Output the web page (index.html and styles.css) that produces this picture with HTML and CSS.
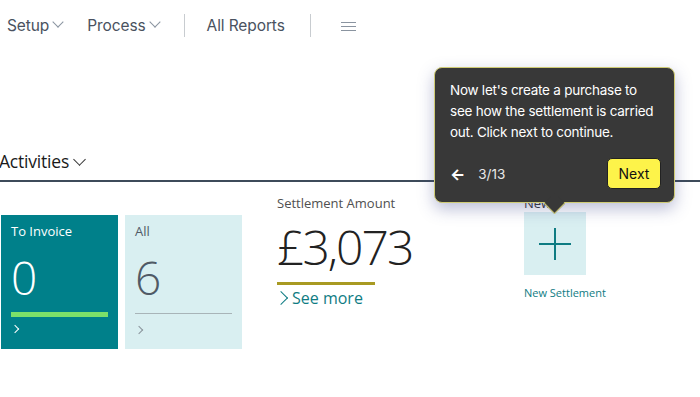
FILE: index.html
```html
<!DOCTYPE html>
<html lang="en">
  <head>
    <meta charset="UTF-8" />
    <meta name="viewport" content="width=device-width, initial-scale=1.0" />
    <title>Settlements</title>
    <link rel="stylesheet" href="styles.css">
  </head>
  <body>
    <!-- 顶部导航 -->
    <nav class="topnav">
      <a class="nav-item" href="#">Setup<span class="chev"></span></a>
      <a class="nav-item" href="#">Process<span class="chev"></span></a>
      <span class="nav-sep"></span>
      <a class="nav-item" href="#">All Reports</a>
      <span class="nav-sep"></span>
      <span class="burger"><i></i><i></i><i></i></span>
    </nav>

    <section class="activities">
      <h2 class="part-title">Activities<span class="chev"></span></h2>

      <div class="cues">
        <a class="cue cue-dark" href="#">
          <span class="cue-label">To Invoice</span>
          <span class="cue-value">0</span>
          <span class="cue-bar bar-green"></span>
          <span class="cue-more"></span>
        </a>
        <a class="cue cue-light" href="#">
          <span class="cue-label">All</span>
          <span class="cue-value">6</span>
          <span class="cue-bar bar-gray"></span>
          <span class="cue-more"></span>
        </a>

        <div class="kpi">
          <span class="kpi-label">Settlement Amount</span>
          <span class="kpi-value">£3,073</span>
          <span class="kpi-bar"></span>
          <a class="see-more" href="#"><span class="see-chev"></span>See more</a>
        </div>

        <div class="action">
          <span class="action-head">New</span>
          <a class="action-tile" href="#">
            <svg width="34" height="34" viewBox="0 0 34 34">
              <path d="M17 1V33M1 17H33" stroke="#0f7c83" stroke-width="2" fill="none" />
            </svg>
          </a>
          <span class="action-label">New Settlement</span>
        </div>
      </div>
    </section>

    <!-- 引导提示 -->
    <div class="teach">
      <p>Now let's create a purchase to see how the settlement is carried out. Click next to continue.</p>
      <div class="teach-foot">
        <span class="teach-back">&#8592;</span>
        <span class="teach-step">3/13</span>
        <button class="teach-next">Next</button>
      </div>
    </div>
  </body>
</html>
```

FILE: styles.css
```css
body {
  margin: 0;
  font-family: "Open Sans", "Noto Sans", sans-serif;
  background: #fff;
  overflow: hidden;
}

a {
  text-decoration: none;
  color: inherit;
}

.chev {
  display: inline-block;
  width: 7px;
  height: 7px;
  border-right: 1px solid #8a94a0;
  border-bottom: 1px solid #8a94a0;
  transform: rotate(45deg);
  margin: 0 0 5px 5px;
}

/* 顶部导航 */
.topnav {
  display: flex;
  align-items: center;
  height: 50px;
  padding-left: 7px;
  font-family: Inter, sans-serif;
  font-size: 15.5px;
  color: #4a5260;
}

.nav-item {
  margin-right: 25px;
  letter-spacing: -0.1px;
}

.nav-sep {
  width: 1px;
  height: 23px;
  background: #c8ccd0;
  margin-right: 22px;
}

.burger {
  display: flex;
  flex-direction: column;
  gap: 3px;
  margin-left: 8px;
  margin-top: 2px;
}
.burger i {
  display: block;
  width: 15px;
  height: 1px;
  background: #8a94a0;
}

/* Activities */
.activities {
  margin-top: 100px;
}

.part-title {
  margin: 0;
  padding: 0 0 8px;
  font-size: 17.5px;
  font-weight: 400;
  line-height: 22px;
  color: #1a1a1a;
  letter-spacing: -0.2px;
  text-indent: -1px;
  border-bottom: 2px solid #3d4b5a;
}
.part-title .chev {
  width: 8px;
  height: 8px;
  border-color: #333;
  margin: 0 0 4px 6px;
}

.cues {
  display: flex;
  align-items: flex-start;
  padding: 12px 0 0 1px;
}

.cue {
  display: flex;
  flex-direction: column;
  width: 117px;
  height: 134px;
  margin-top: 21px;
  margin-right: 7px;
  padding: 8px 10px 0;
  box-sizing: border-box;
}

.cue-dark {
  background: #00808a;
  color: #fff;
}
.cue-light {
  background: #d9eff1;
  color: #505a66;
}

.cue-label {
  font-size: 13px;
  line-height: 16px;
}

.cue-value {
  font-size: 46px;
  font-weight: 300;
  line-height: 50px;
  margin-top: 13px;
}

.cue-bar {
  display: block;
  height: 5px;
  margin: 10px 0 0;
}
.bar-green {
  background: #7ce06a;
}
.bar-gray {
  height: 1px;
  background: #a8b4b8;
  margin-top: 11px;
}

.cue-more {
  display: block;
  width: 5px;
  height: 5px;
  border-right: 1px solid currentColor;
  border-top: 1px solid currentColor;
  transform: rotate(45deg);
  margin: 9px 0 0 1px;
}
.cue-light .cue-more {
  margin-top: 13px;
  color: #8a949c;
}

.kpi {
  display: flex;
  flex-direction: column;
  margin-left: 28px;
  width: 200px;
}

.kpi-label {
  font-size: 13px;
  color: #505050;
  line-height: 18px;
}

.kpi-value {
  font-size: 48px;
  font-weight: 300;
  color: #222;
  line-height: 56px;
  margin-top: 7px;
  letter-spacing: -2px;
}

.kpi-bar {
  width: 98px;
  height: 3px;
  background: #a89a22;
  margin-top: 7px;
}

.see-more {
  display: flex;
  align-items: center;
  font-size: 16px;
  color: #0f7c83;
  margin-top: 2px;
  margin-left: 3px;
}
.see-chev {
  width: 9px;
  height: 9px;
  border-right: 1px solid #0f7c83;
  border-top: 1px solid #0f7c83;
  transform: rotate(45deg);
  margin-right: 6px;
  margin-left: -4px;
}

.action {
  display: flex;
  flex-direction: column;
  margin-left: 47px;
}

.action-head {
  font-size: 13px;
  color: #333;
  line-height: 18px;
}

.action-tile {
  display: flex;
  align-items: center;
  justify-content: center;
  width: 62px;
  height: 63px;
  background: #d9eff1;
}

.action-label {
  font-size: 11px;
  color: #0f7c83;
  margin-top: 10px;
}

/* 引导提示 */
.teach {
  position: absolute;
  left: 434px;
  top: 67px;
  width: 241px;
  height: 136px;
  box-sizing: border-box;
  padding: 12px 15px 0;
  background: #383838;
  border: 1px solid #cfcb74;
  border-radius: 8px;
  color: #fff;
  font-family: Inter, sans-serif;
  font-size: 13.5px;
  box-shadow: 0 6px 16px rgba(60, 70, 140, 0.35);
}

.teach::after {
  content: "";
  position: absolute;
  left: 112px;
  bottom: -9px;
  width: 14px;
  height: 14px;
  background: #383838;
  border-right: 1px solid #cfcb74;
  border-bottom: 1px solid #cfcb74;
  transform: rotate(45deg);
}

.teach p {
  margin: 0;
  line-height: 21px;
  letter-spacing: -0.25px;
}

.teach-foot {
  display: flex;
  align-items: center;
  margin-top: 15px;
}

.teach-back {
  font-size: 16px;
  font-weight: 700;
  margin-right: 13px;
}

.teach-step {
  font-size: 13.5px;
  color: #e8e8e8;
}

.teach-next {
  margin-left: auto;
  margin-right: -2px;
  width: 54px;
  height: 31px;
  background: #fdf34a;
  border: 1px solid #222;
  border-radius: 5px;
  font-family: Inter, sans-serif;
  font-size: 14px;
  color: #111;
  cursor: pointer;
}
```
